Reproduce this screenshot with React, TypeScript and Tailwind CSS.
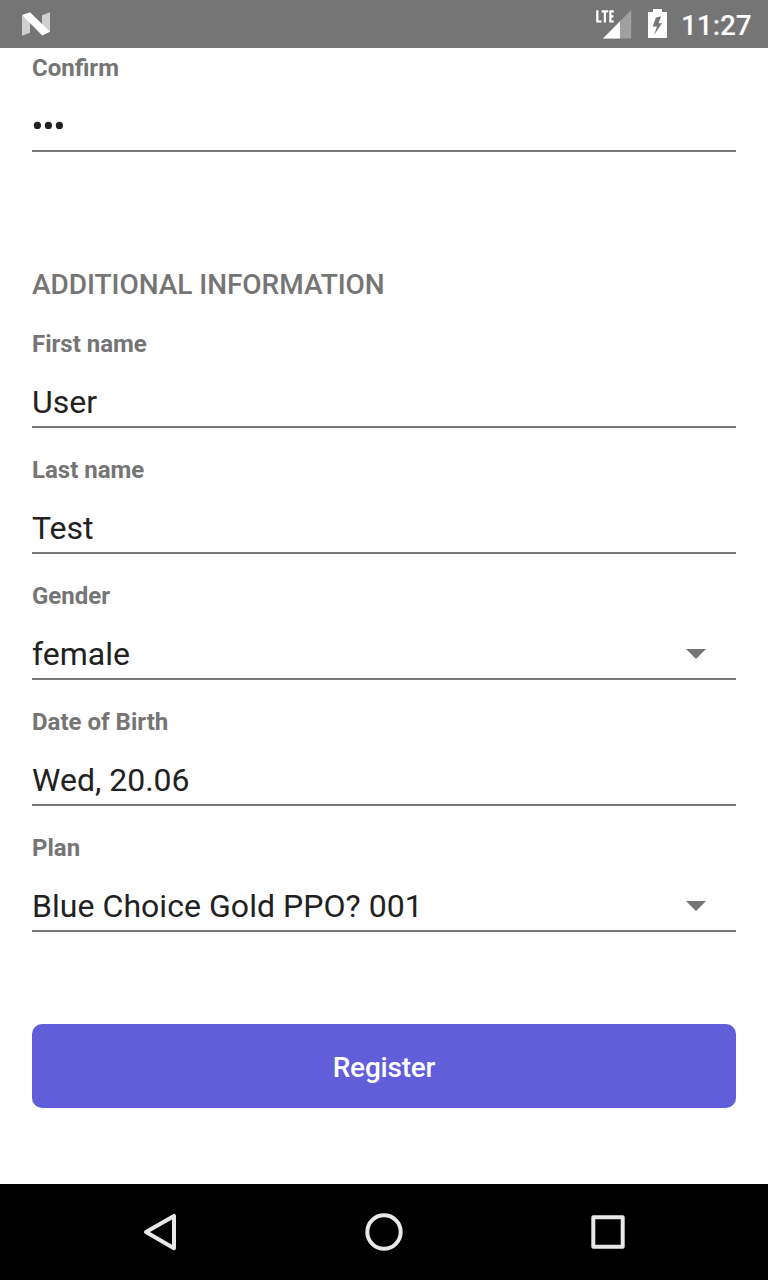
import React from 'react';

type FieldProps = { label: string; value: string; select?: boolean; tracking?: string };

function Field({ label, value, select = false, tracking = '' }: FieldProps) {
  return (
    <div className="flex h-[126px] flex-col">
      <div className="h-7 text-[24px] leading-7 font-bold text-[#757575]">{label}</div>
      <div className="mt-[13px] flex h-[57px] items-center justify-between border-b-2 border-[#757575] pt-[7px] text-[32px] leading-[38px] text-[#212121]">
        <span className={tracking}>{value}</span>
        {select && (
          <svg className="mr-[30px] h-[10px] w-5" viewBox="0 0 20 10">
            <path d="M0 0h20L10 10z" fill="#757575" />
          </svg>
        )}
      </div>
    </div>
  );
}

export default function App() {
  return (
    <div className="flex h-[1280px] w-[768px] flex-col overflow-hidden bg-white font-[Roboto,sans-serif]">
      <header className="flex h-12 shrink-0 items-center bg-[#757575] text-white">
        <svg className="ml-[22px] h-6 w-7" viewBox="0 0 28 24">
          <path d="M0 3L8 8V20.7L0 23.7zM20 3.3L28 .3V20L20 14z" fill="#cfcfcf" />
          <path d="M0 3L8 .3L28 19.8L20.3 23.5z" fill="#fff" />
        </svg>
        <svg className="ml-[546px] h-8 w-9" viewBox="0 0 36 32">
          <path d="M7 30.5L35.2 2V30.5z" fill="#a0a0a0" />
          <path d="M7 30.5L24 13.3V30.5z" fill="#fff" />
          <path d="M1.3 2.2v11.3h4.2M5.6 3.4h6.6M8.9 3.4v11.2M17.8 3.4h-3.4v10.1h3.4M14.4 8.4h3.1" fill="none" stroke="#fff" strokeWidth="2.2" />
        </svg>
        <svg className="ml-4 h-[30px] w-[19px]" viewBox="0 0 19 30">
          <path fillRule="evenodd" d="M5 0h9v3h5v26H0V3h5zM13 7.3L8 8.5L4.7 17.5H9L6 26L14 14.2h-3.5z" fill="#fff" />
        </svg>
        <span className="ml-[14px] pt-[4px] text-[28px] leading-8 font-medium tracking-[-0.1px]">11:27</span>
      </header>
      <main className="h-[1136px] shrink-0 px-8">
        <div className="flex h-[104px] flex-col border-b-2 border-[#757575] pt-[6px]">
          <div className="text-[24px] leading-7 font-bold text-[#757575]">Confirm</div>
          <svg className="mt-[39px] h-[9px] w-8" viewBox="0 0 32 9" fill="#212121">
            <circle cx="5.4" cy="4.4" r="3.6" />
            <circle cx="16.4" cy="4.4" r="3.6" />
            <circle cx="27.4" cy="4.4" r="3.6" />
          </svg>
        </div>
        <h1 className="mt-[117px] text-[28px] leading-8 font-medium tracking-[-0.04px] text-[#757575]">ADDITIONAL INFORMATION</h1>
        <div className="pt-[29px]">
          <Field label="First name" value="User" />
          <Field label="Last name" value="Test" />
          <Field label="Gender" value="female" select />
          <Field label="Date of Birth" value="Wed, 20.06" />
          <Field label="Plan" value="Blue Choice Gold PPO? 001" tracking="tracking-[0.05px]" select />
        </div>
        <button className="mt-[64px] flex h-[84px] w-full items-center justify-center rounded-[10px] bg-[#625eda] pt-[4px] text-[28px] font-medium tracking-[-0.2px] text-white">Register</button>
      </main>
      <nav className="flex h-24 shrink-0 items-center bg-black">
        <svg className="ml-[140px] h-10 w-10" viewBox="0 0 40 40" fill="none" stroke="#e8e8e8" strokeWidth="4" strokeLinejoin="round">
          <path d="M34 3.9v32.4L6 20.1z" />
        </svg>
        <svg className="ml-[184px] h-10 w-10" viewBox="0 0 40 40" fill="none" stroke="#e8e8e8" strokeWidth="4">
          <circle cx="20" cy="20" r="16.7" />
        </svg>
        <svg className="ml-[184px] h-10 w-10" viewBox="0 0 40 40" fill="none" stroke="#e8e8e8" strokeWidth="4" strokeLinejoin="round">
          <path d="M5.3 5.3h29.4v29.4H5.3z" />
        </svg>
      </nav>
    </div>
  );
}
